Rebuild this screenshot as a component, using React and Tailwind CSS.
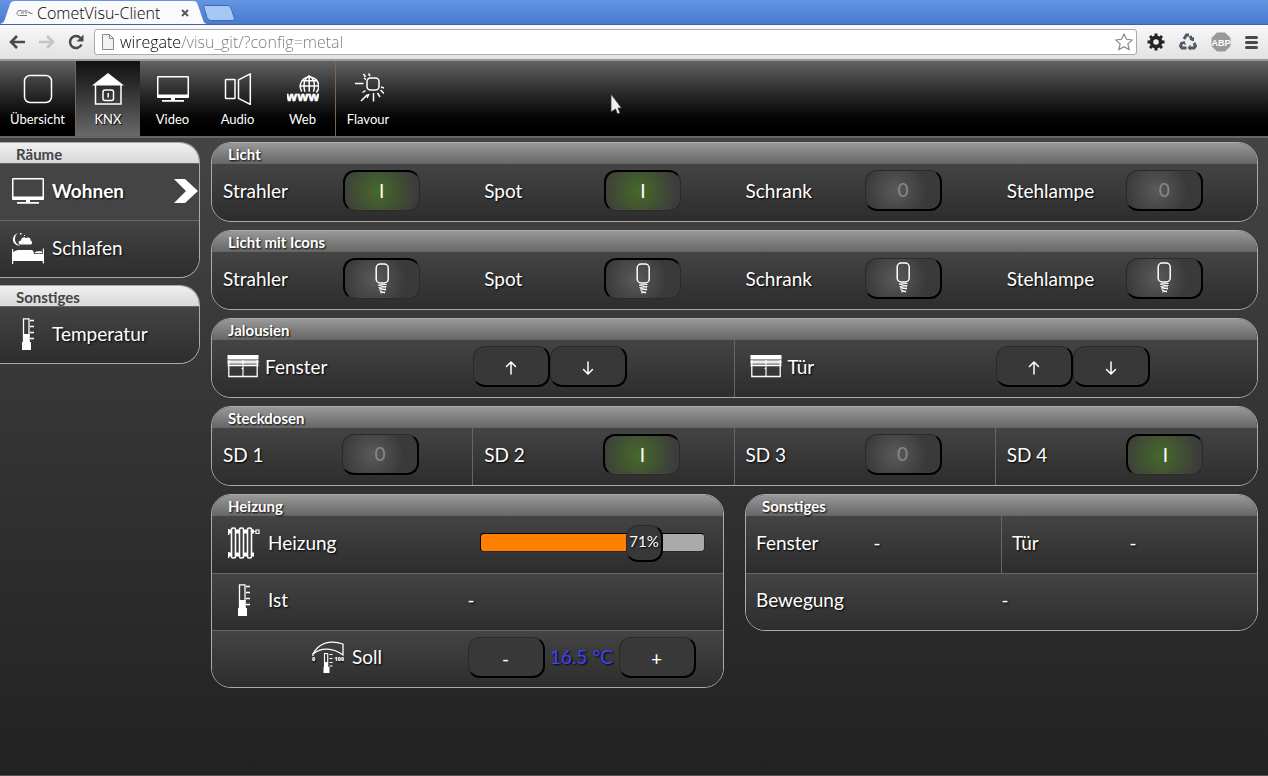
import React, { useState } from "react";

/* ---------- icons ---------- */

function Icon({ children, className = "size-8" }) {
  return (
    <svg viewBox="0 0 32 32" className={`${className} shrink-0`} fill="none" stroke="white" strokeWidth="1.5" aria-hidden="true">
      {children}
    </svg>
  );
}

const OverviewIcon = () => (
  <Icon>
    <rect x="2.5" y="2.5" width="27" height="27" rx="5.5" />
  </Icon>
);

const HouseIcon = () => (
  <Icon>
    <path d="M0 12.5 16 0l16 12.5z" fill="white" stroke="none" />
    <path d="M3.5 12v19h25.5V12" />
    <rect x="11" y="17" width="10.5" height="10.5" rx="2" />
    <path d="M16.2 20v4.5" />
  </Icon>
);

const ScreenIcon = () => (
  <Icon>
    <rect x="0.75" y="3.75" width="30.5" height="20.5" rx="0.5" />
    <path d="M0.5 21.5h31v3.2H0.5zM14 24.5h4V27h9v1.8H5V27h9z" fill="white" stroke="none" />
  </Icon>
);

const SpeakerIcon = () => (
  <Icon>
    <rect x="3.5" y="6.5" width="9.5" height="19" rx="0.5" />
    <path d="M16.5 6.8 28.3.8v30.6l-11.8-6z" strokeLinejoin="round" />
  </Icon>
);

const WebIcon = () => (
  <Icon>
    <path d="M14.8 18.5a9.3 9.3 0 1 1 14.6 1M22.2 2.8v16M18 18.8c-2-6-1.2-13 4.2-16 5.4 3 6.2 10 4.2 16M14.5 7.8h15.4M12.9 13h18.6" />
    <text x="-1" y="28" fill="white" stroke="white" strokeWidth="0.5" fontFamily="Open Sans, sans-serif" fontWeight="700" fontSize="13">www</text>
  </Icon>
);

const SunIcon = () => (
  <Icon>
    <rect x="15" y="5" width="12" height="12" rx="3.5" />
    <path d="M3 10.5h8.500M11.5.8l2 3.200M16.500.5l1.500 2.500M12 5l2 1.500M9 28l6.500-6.500M10.500 19.500l3-2M15 25l2-4M21.500 20v8.500M25.500 20l2.500 4M28.500 17l3.500 3.500M29 14l3 1" />
  </Icon>
);

const BedIcon = () => (
  <Icon>
    <path d="M6 1C2 2.5.5 5.500 1 8.500S4.500 14 8.500 13.500C4.500 12.500 2.800 10 3 7S4 2.500 6 1zM8 12.500C6 12 6 8.500 9 8.500 9.500 5.500 12 4.500 14 6c3-1.500 5 .5 4.500 2.500 2 .5 2 4 0 4zM8 1h1.500v1.500H8zM12 3h1v1h-1zM0 17h1.200v3H1.500c1.500-1.500 4-2 6-2h12c1.500 0 2 1 2.500 4h8.800v-5.500H32v15h-1.200V29H1.200v3H0zM22.500 20.500c1.500-1.500 6-1.500 7.500-1v1.800h-7z" fill="white" stroke="none" />
  </Icon>
);

const ThermoIcon = () => (
  <Icon>
    <path d="M11.5 25V.8h5.500V25M18 2.500h4M18 8.500h4M18 14.500h4M18 20.500h4" strokeWidth="1.3" />
    <path d="M11 16h6.500v8H19v8h-9v-8h1z" fill="white" stroke="none" />
  </Icon>
);

const BlindIcon = () => (
  <Icon>
    <path d="M.5 4h31v4.500H.5z" fill="white" stroke="none" />
    <path d="M.5 9h31v4.500H.5z" fill="white" fillOpacity="0.6" stroke="none" />
    <path d="M1.800 9v16.500h28.400V9M.5 11h31M.5 14.500h31" strokeWidth="1.3" />
    <path d="M16 9v16.500M14.500 17.500h2" strokeWidth="1.2" />
  </Icon>
);

const RadiatorIcon = () => (
  <Icon>
    <path d="M0 4.500h26M0 27.500h26" strokeWidth="4" />
    <path d="M.5 2v6M.5 25v6" />
    <g fill="#3d3d3d" strokeWidth="1.6">
      <rect x="3.5" y="1" width="4" height="30" rx="1.5" />
      <rect x="11.5" y="1" width="4" height="30" rx="1.5" />
      <rect x="19.5" y="1" width="4" height="30" rx="1.5" />
    </g>
    <path d="M25.500 4.500h2M28 3h3v3.500h-3z" strokeWidth="1.2" />
  </Icon>
);

const SetpointIcon = () => (
  <Icon>
    <path d="M1 13C7 2 18-1.500 31 3v11C21 6.500 9 6 1 13zM1 12v3" strokeWidth="1.3" />
    <path d="M12.500 27V12.500h3.200V27M17.500 13.500h3M17.500 17.500h3M17.500 21.500h3M17.500 25h3" strokeWidth="1.1" />
    <path d="M12 21h4v5h1.500v6h-6v-6H12z" fill="white" stroke="none" />
    <g fill="white" stroke="none" fontFamily="Open Sans, sans-serif" fontWeight="800" fontSize="5.5">
      <text x="0" y="19.5">0</text>
      <text x="22.5" y="19.5">100</text>
    </g>
  </Icon>
);

const BulbIcon = () => (
  <Icon>
    <rect x="10.2" y="1" width="12" height="19" rx="4" />
    <path d="M12 22l8.500-.5M12.500 24.500l8-1M13 27l7-1M14 30l5-1M12 22l8 2.500M13 25l7 2M14 28l5 2" strokeWidth="1.1" />
  </Icon>
);

/* ---------- browser chrome ---------- */

function BrowserChrome() {
  return (
    <div className="font-['Open_Sans',sans-serif]">
      <div className="flex h-[25px] items-end border-b border-[#3a62ae] bg-linear-to-b from-[#6496e2] to-[#4a79cf]">
        <svg viewBox="0 0 16 24" className="h-6 w-4 shrink-0" aria-hidden="true">
          <path d="M0 24c3-1 4-2 5-5L10 4c1-2 2-3 6-3v23z" fill="#fafafa" />
        </svg>
        <div className="mt-px flex h-[23px] w-[177px] items-center bg-[#fafafa]">
          <svg viewBox="0 0 18 8" className="h-2 w-[18px]" fill="none" stroke="#777" aria-hidden="true">
            <path d="M5 1.500C2 1 1 3 1 4.500S3 7 5 6.500M5 2h7M5 4h3M9 4h2M5 6.500h6M12 4l1.500-1 1 2 1-1 1 1" />
          </svg>
          <span className="ml-[3px] flex-1 whitespace-nowrap text-base leading-5 font-light text-black">CometVisu-Client</span>
          <button aria-label="Tab schließen" className="mr-1 size-2">
            <svg viewBox="0 0 8 8" className="size-2" stroke="#555" strokeWidth="1.8" aria-hidden="true">
              <path d="M1 1l6 6M7 1 1 7" />
            </svg>
          </button>
        </div>
        <svg viewBox="0 0 14 24" className="h-6 w-3.5 shrink-0" aria-hidden="true">
          <path d="M0 1c3 0 3.500 1 4.500 3L10 20c1 3 2 3.500 4 4H0z" fill="#fafafa" />
        </svg>
        <button aria-label="Neuer Tab" className="-ml-1 mb-[3px]">
          <svg viewBox="0 0 32 16" className="h-4 w-8" aria-hidden="true">
            <path d="M1 3c-.5-2 0-2.500 2-2.500h21c2 0 3 .5 4 2.500l3 9c.8 2.500 0 3.500-2 3.500H9c-2.500 0-4-1-5-3z" fill="#a4c8f6" stroke="#4468ad" />
          </svg>
        </button>
      </div>
      <div className="flex h-9 items-center border-b-2 border-[#999] bg-linear-to-b from-[#f8f8f8] to-[#e2e2e2] pl-2 pr-2.5">
        <button aria-label="Zurück">
          <svg viewBox="0 0 18 16" className="h-4 w-[18px]" fill="none" stroke="#4a4a4a" strokeWidth="2.6" aria-hidden="true">
            <path d="M17 8H4M9 2 3 8l6 6" />
          </svg>
        </button>
        <button aria-label="Vor" className="ml-3">
          <svg viewBox="0 0 18 16" className="h-4 w-[18px]" fill="none" stroke="#c4c4c4" strokeWidth="2.6" aria-hidden="true">
            <path d="M1 8h13M9 2l6 6-6 6" />
          </svg>
        </button>
        <button aria-label="Neu laden" className="ml-3">
          <svg viewBox="0 0 16 16" className="size-4" fill="none" stroke="#4a4a4a" strokeWidth="2.5" aria-hidden="true">
            <path d="M13.500 10.500A6 6 0 1 1 12.500 4" />
            <path d="M15.500.5v7h-7z" fill="#4a4a4a" stroke="none" />
          </svg>
        </button>
        <div className="ml-2.5 flex h-[26px] flex-1 items-center rounded-[3px] border border-[#aaa] bg-white pl-[7px] pr-[3px]">
          <svg viewBox="0 0 12 16" className="h-4 w-3" fill="#f2f2f2" stroke="#8a8a8a" aria-hidden="true">
            <path d="M.5.5h7l4 4v11H.5zM7.500.5v4h4" />
          </svg>
          <input
            aria-label="Adresse"
            defaultValue="wiregate/visu_git/?config=metal"
            className="ml-1.5 min-w-0 flex-1 bg-linear-to-r from-black from-[62px] to-[#777] to-[62px] bg-clip-text text-base leading-5 font-light text-transparent outline-none"
          />
          <button aria-label="Lesezeichen">
            <svg viewBox="0 0 18 18" className="size-[18px]" fill="white" stroke="#888" strokeWidth="1.2" aria-hidden="true">
              <path d="m9 1 2.400 5.300 5.800.7-4.300 3.900 1.200 5.700L9 13.700l-5.100 2.900 1.200-5.700L.8 7l5.800-.7z" />
            </svg>
          </button>
        </div>
        <div className="ml-2.5 flex items-center gap-3.5">
          <svg viewBox="0 0 18 18" className="size-[18px]" fill="none" stroke="#222" aria-hidden="true">
            <circle cx="9" cy="9" r="4.600" strokeWidth="3.600" />
            <path d="M9 .5v3M9 14.500v3M.5 9h3M14.500 9h3M3 3l2 2M13 13l2 2M15 3l-2 2M5 13l-2 2" strokeWidth="3" />
          </svg>
          <svg viewBox="0 0 18 18" className="size-[18px]" fill="none" stroke="#4c5a68" strokeWidth="3" aria-hidden="true">
            <path d="M5 6l2.500-4H10M11 3l2 3.500M15 10l1.500 3-1.500 2h-4M7.500 15H3l-1.500-2L3 9.500" />
            <path d="M15 4v4.500l-4.500-1.800zM11.500 11.500v6L8.500 15zM1 9.500 5.500 8 7 12z" fill="#4c5a68" stroke="none" />
          </svg>
          <svg viewBox="0 0 20 20" className="size-5" aria-hidden="true">
            <path d="M6 .5h8L19.500 6v8L14 19.500H6L.5 14V6z" fill="#999" />
            <text x="10" y="13.500" textAnchor="middle" fontSize="9" fontWeight="700" fontFamily="Liberation Sans, sans-serif" fill="white">ABP</text>
          </svg>
          <button aria-label="Menü" className="flex w-[13px] flex-col gap-0.5">
            <span className="h-[3px] rounded-sm bg-[#4a4a4a]" />
            <span className="h-[3px] rounded-sm bg-[#4a4a4a]" />
            <span className="h-[3px] rounded-sm bg-[#4a4a4a]" />
          </button>
        </div>
      </div>
    </div>
  );
}

/* ---------- navigation ---------- */

const NAV = [
  { label: "Übersicht", icon: <OverviewIcon />, box: "w-[76px] border-r border-[#7a6652]" },
  { label: "KNX", icon: <HouseIcon />, box: "w-16 bg-linear-to-b from-[#111] to-[#6a6a6a]", current: "page" },
  { label: "Video", icon: <ScreenIcon />, box: "w-[65px]" },
  { label: "Audio", icon: <SpeakerIcon />, box: "w-[65px]" },
  { label: "Web", icon: <WebIcon />, box: "w-[66px] border-r border-[#7a6652]" },
  { label: "Flavour", icon: <SunIcon />, box: "w-16" },
];

function TopNav() {
  return (
    <nav className="flex h-[77px] border-b-2 border-[#666] bg-linear-to-b from-[#636363] to-black">
      {NAV.map((n) => (
        <a key={n.label} href="#" aria-current={n.current} className={`flex flex-col items-center pt-3 ${n.box}`}>
          {n.icon}
          <span className="mt-1 text-[13px] leading-5 text-shadow-[1px_1px_1px_#000]">{n.label}</span>
        </a>
      ))}
    </nav>
  );
}

function SideItem({ icon, label, active }) {
  return (
    <a
      href="#"
      aria-current={active ? "true" : undefined}
      className={`flex h-[57px] items-center gap-2 border-t border-[#666] pb-0.5 pl-3 text-shadow-[1px_1px_2px_#000] ${
        active ? "bg-[#444] font-bold" : "bg-linear-to-b from-[#444] to-[#2d2d2d]"
      }`}
    >
      {icon}
      <span className="flex-1">{label}</span>
      {active && (
        <svg viewBox="0 0 24 24" className="mr-px size-6" fill="white" aria-hidden="true">
          <path d="M0 0h11l13 12-13 12H0l12-12z" />
        </svg>
      )}
    </a>
  );
}

function SideGroup({ title, children }) {
  return (
    <section className="overflow-hidden rounded-r-[20px] border border-l-0 border-[#aaa]">
      <h2 className="h-5 bg-linear-to-b from-[#f0f0f0] to-[#d8d8d8] pl-4 text-[15px] leading-[22px] font-bold text-[#444]">{title}</h2>
      {children}
    </section>
  );
}

/* ---------- widgets ---------- */

function Group({ title, children }) {
  return (
    <section className="overflow-hidden rounded-[20px] border border-[#aaa]">
      <h2 className="h-[21px] bg-linear-to-b from-[#999] to-[#666] pl-4 text-[15px] leading-[22px] font-bold text-shadow-[1px_1px_2px_#000]">{title}</h2>
      {children}
    </section>
  );
}

const ROW = "h-[57px] bg-linear-to-b from-[#444] to-[#2d2d2d] text-shadow-[1px_1px_2px_#000]";

const RAISED = "border-t border-l border-r-2 border-b-2 border-t-[#2a2a2a] border-l-[#2a2a2a] border-r-black border-b-black";
const PRESSED = "border-t-2 border-l-2 border-r border-b border-t-black border-l-black border-r-[#2a2a2a] border-b-[#2a2a2a]";

function Switch({ name, initial, bulb }) {
  const [on, setOn] = useState(initial);
  let fill = "bg-radial-[circle_at_40%_50%] from-[#5a5a5a] to-[#3a3a3a] to-65%";
  if (on && !bulb) fill = "bg-radial-[circle_at_45%_50%] from-[#476a29] to-[#3c3c3c] to-85%";
  return (
    <button
      aria-label={name}
      aria-pressed={on}
      onClick={() => setOn(!on)}
      className={`flex h-[41px] w-[77px] items-center justify-center rounded-xl ${on ? PRESSED : RAISED} ${fill} ${on ? "text-white" : "text-[#888]"}`}
    >
      {bulb ? <BulbIcon /> : on ? "I" : "0"}
    </button>
  );
}

function PushButton({ name, children }) {
  return (
    <button aria-label={name} className={`flex h-[41px] w-[77px] items-center justify-center rounded-xl bg-[#383838] pt-1 ${RAISED}`}>
      {children}
    </button>
  );
}

function SwitchCell({ label, on, bulb, divider }) {
  return (
    <div className={`flex items-center pb-1 ${divider ? "border-r border-[#666] last:border-r-0" : ""}`}>
      <span className="w-1/2 pl-[11px]">{label}</span>
      <Switch name={label} initial={on} bulb={bulb} />
    </div>
  );
}

function SwitchGroup({ title, items, bulb, divider }) {
  return (
    <Group title={title}>
      <div className={`grid grid-cols-4 ${ROW}`}>
        {items.map(([label, on]) => (
          <SwitchCell key={label} label={label} on={on} bulb={bulb} divider={divider} />
        ))}
      </div>
    </Group>
  );
}

function Arrow({ down }) {
  return (
    <svg viewBox="0 0 12 14" className="h-3.5 w-3" fill="none" stroke="white" strokeWidth="1.5" strokeLinecap="round" aria-hidden="true">
      {down ? <path d="M6 1v12M1.500 8.500 6 13l4.500-4.500" /> : <path d="M6 13V1M1.500 5.500 6 1l4.500 4.500" />}
    </svg>
  );
}

function BlindCell({ label }) {
  return (
    <div className="flex items-center border-r border-[#666] pb-1 last:border-r-0">
      <div className="flex w-1/2 items-center gap-1.5 pl-[15px]">
        <BlindIcon />
        <span>{label}</span>
      </div>
      <PushButton name={`${label} auf`}>
        <Arrow />
      </PushButton>
      <PushButton name={`${label} ab`}>
        <Arrow down />
      </PushButton>
    </div>
  );
}

function Slider() {
  return (
    <div className="relative mr-[18px] ml-3 flex-1">
      <input
        type="range"
        aria-label="Heizung"
        min="0"
        max="100"
        defaultValue="71"
        className="block h-[19px] w-full appearance-none rounded border border-t-black border-r-[#2a2a2a] border-b-[#2a2a2a] border-l-black bg-linear-to-r from-[#ff8000] from-71% to-[#aaa] to-71% [&::-webkit-slider-thumb]:h-4 [&::-webkit-slider-thumb]:w-9 [&::-webkit-slider-thumb]:appearance-none"
      />
      <output className={`pointer-events-none absolute -top-2 left-[65%] flex h-[37px] w-[37px] items-center justify-center rounded-xl bg-[#383838] pb-1 text-[15px] ${RAISED}`}>
        71%
      </output>
    </div>
  );
}

function ValueCell({ label }) {
  return (
    <div className="flex flex-1 items-center border-r border-[#666] pb-1 last:border-r-0">
      <span className="w-1/2 pl-2.5">{label}</span>
      <span>-</span>
    </div>
  );
}

/* ---------- page ---------- */

export default function App() {
  return (
    <div className="flex min-h-screen flex-col border-b border-[#5a5055] bg-[#222] font-[Lato,sans-serif] text-[19px] leading-6 text-white">
      <BrowserChrome />
      <TopNav />
      <div className="flex flex-1 gap-[11px] bg-linear-to-b from-[#444] to-[#222] pt-1 pr-2.5">
        <aside className="flex w-[200px] shrink-0 flex-col gap-[7px]">
          <SideGroup title="Räume">
            <SideItem icon={<ScreenIcon />} label="Wohnen" active />
            <SideItem icon={<BedIcon />} label="Schlafen" />
          </SideGroup>
          <SideGroup title="Sonstiges">
            <SideItem icon={<ThermoIcon />} label="Temperatur" />
          </SideGroup>
        </aside>

        <main className="flex min-w-0 flex-1 flex-col gap-2">
          <SwitchGroup title="Licht" items={[["Strahler", true], ["Spot", true], ["Schrank", false], ["Stehlampe", false]]} />
          <SwitchGroup title="Licht mit Icons" bulb items={[["Strahler", true], ["Spot", true], ["Schrank", false], ["Stehlampe", false]]} />
          <Group title="Jalousien">
            <div className={`grid grid-cols-2 ${ROW}`}>
              <BlindCell label="Fenster" />
              <BlindCell label="Tür" />
            </div>
          </Group>
          <SwitchGroup title="Steckdosen" divider items={[["SD 1", false], ["SD 2", true], ["SD 3", false], ["SD 4", true]]} />

          <div className="grid grid-cols-2 items-start gap-[21px]">
            <Group title="Heizung">
              <div className={`flex items-center pb-1 ${ROW}`}>
                <div className="flex w-1/2 items-center gap-2 pl-4">
                  <RadiatorIcon />
                  <span>Heizung</span>
                </div>
                <Slider />
              </div>
              <div className={`flex items-center border-t border-[#666] pb-1 ${ROW}`}>
                <div className="flex w-1/2 items-center gap-2 pl-4">
                  <ThermoIcon />
                  <span>Ist</span>
                </div>
                <span>-</span>
              </div>
              <div className={`flex items-center border-t border-[#666] pb-1 ${ROW}`}>
                <div className="flex w-1/2 items-center gap-2 pl-25">
                  <SetpointIcon />
                  <span>Soll</span>
                </div>
                <PushButton name="Soll verringern">-</PushButton>
                <span className="w-[74px] text-center text-[#4040ff]">16.5 °C</span>
                <PushButton name="Soll erhöhen">+</PushButton>
              </div>
            </Group>

            <Group title="Sonstiges">
              <div className={`flex ${ROW}`}>
                <ValueCell label="Fenster" />
                <ValueCell label="Tür" />
              </div>
              <div className={`flex border-t border-[#666] ${ROW}`}>
                <ValueCell label="Bewegung" />
              </div>
            </Group>
          </div>
        </main>
      </div>

      <svg viewBox="0 0 12 22" className="pointer-events-none absolute top-[93px] left-[610px] h-[22px] w-3" aria-hidden="true">
        <path d="M1 1v18l4.500-3 2 5 2.500-1-2-5h3.500z" fill="#eee" stroke="#333" strokeWidth="0.8" />
      </svg>
    </div>
  );
}
